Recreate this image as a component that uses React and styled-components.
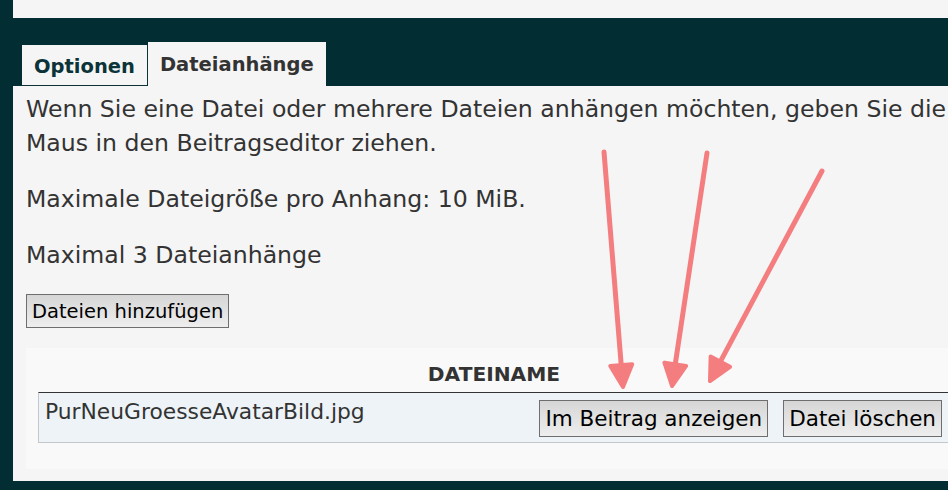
import React from 'react'
import styled, { createGlobalStyle } from 'styled-components'

const GlobalStyle = createGlobalStyle`
  html, body {
    margin: 0;
    padding: 0;
    background: #022d33;
    overflow: hidden;
  }
  body {
    font-family: "DejaVu Sans", Verdana, sans-serif;
  }
`

const Page = styled.div`
  width: 1200px;
  height: 490px;
  padding-left: 13px;
  position: relative;
`

const TopBar = styled.div`
  height: 18px;
  background: #f5f5f5;
`

const Tabs = styled.div`
  display: flex;
  align-items: flex-end;
  margin-top: 24px;
  padding-left: 9px;
`

const Tab = styled.div`
  box-sizing: border-box;
  height: ${p => (p.active ? '44px' : '41px')};
  padding: 0 12px;
  display: flex;
  align-items: center;
  background: #f5f5f5;
  font-weight: bold;
  font-size: 19.5px;
  color: ${p => (p.active ? '#333' : '#0b3338')};
  border-right: ${p => (p.active ? 'none' : '1px solid #0b3338')};
  border-bottom: ${p => (p.active ? 'none' : '1px solid #0b3338')};
  padding-top: ${p => (p.active ? '0' : '2px')};
`

const Panel = styled.div`
  background: #f5f5f5;
  padding: 6px 0 12px 13px;
  color: #333;
`

const Para = styled.p`
  margin: 0 0 22px 0;
  font-size: 23.6px;
  line-height: 34px;
  white-space: nowrap;
`

const Button = styled.button`
  font-family: "DejaVu Sans", Verdana, sans-serif;
  font-size: ${p => p.size || '19.5px'};
  color: #000;
  border: 1px solid #6e6e6e;
  background: linear-gradient(#d6d6d6, #eeeeee);
  padding: 0 5px;
  height: ${p => p.h || '34px'};
  border-radius: 0;
`

const FileBox = styled.div`
  margin-top: 20px;
  width: 930px;
  background: #f9f9f9;
  padding: 10px 0 26px 12px;
`

const HeaderCell = styled.div`
  width: 912px;
  text-align: center;
  font-weight: bold;
  font-size: 20.2px;
  color: #333;
  line-height: 32px;
  padding-bottom: 2px;
`

const FileRow = styled.div`
  box-sizing: border-box;
  width: 912px;
  height: 51px;
  display: flex;
  justify-content: space-between;
  background: #edf3f7;
  border-top: 1px solid #333;
  border-bottom: 1px solid #c4c8cb;
  border-left: 1px solid #c4c8cb;
`

const FileName = styled.div`
  padding: 6px 0 0 6px;
  font-size: 21.8px;
  color: #333;
`

const Actions = styled.div`
  display: flex;
  gap: 15px;
  padding: 7px 8px 0 0;
  align-items: flex-start;
`

const Arrows = styled.svg`
  position: absolute;
  left: 0;
  top: 0;
  pointer-events: none;
`

function Arrow({ x1, y1, x2, y2 }) {
  const dx = x2 - x1
  const dy = y2 - y1
  const len = Math.hypot(dx, dy)
  const ux = dx / len
  const uy = dy / len
  const bx = x2 - ux * 22
  const by = y2 - uy * 22
  const px = -uy * 11
  const py = ux * 11
  return (
    <g>
      <line x1={x1} y1={y1} x2={bx} y2={by} stroke="#f47d7f" strokeWidth="5" strokeLinecap="round" />
      <polygon
        points={`${x2},${y2} ${bx + px},${by + py} ${bx - px},${by - py}`}
        fill="#f47d7f"
        stroke="#f47d7f"
        strokeWidth="4"
        strokeLinejoin="round"
      />
    </g>
  )
}

export default function App() {
  return (
    <>
      <GlobalStyle />
      <Page>
        <TopBar />
        <Tabs>
          <Tab>Optionen</Tab>
          <Tab active>Dateianhänge</Tab>
        </Tabs>
        <Panel>
          <Para>
            Wenn Sie eine Datei oder mehrere Dateien anhängen möchten, geben Sie die
            <br />
            Maus in den Beitragseditor ziehen.
          </Para>
          <Para>Maximale Dateigröße pro Anhang: 10 MiB.</Para>
          <Para>Maximal 3 Dateianhänge</Para>
          <Button h="34px">Dateien hinzufügen</Button>
          <FileBox>
            <HeaderCell>DATEINAME</HeaderCell>
            <FileRow>
              <FileName>PurNeuGroesseAvatarBild.jpg</FileName>
              <Actions>
                <Button size="21.5px" h="37px">Im Beitrag anzeigen</Button>
                <Button size="21.5px" h="37px">Datei löschen</Button>
              </Actions>
            </FileRow>
          </FileBox>
        </Panel>
        <Arrows width="948" height="490">
          <Arrow x1={604} y1={152} x2={623} y2={387} />
          <Arrow x1={707} y1={153} x2={672} y2={386} />
          <Arrow x1={822} y1={171} x2={710} y2={381} />
        </Arrows>
      </Page>
    </>
  )
}
